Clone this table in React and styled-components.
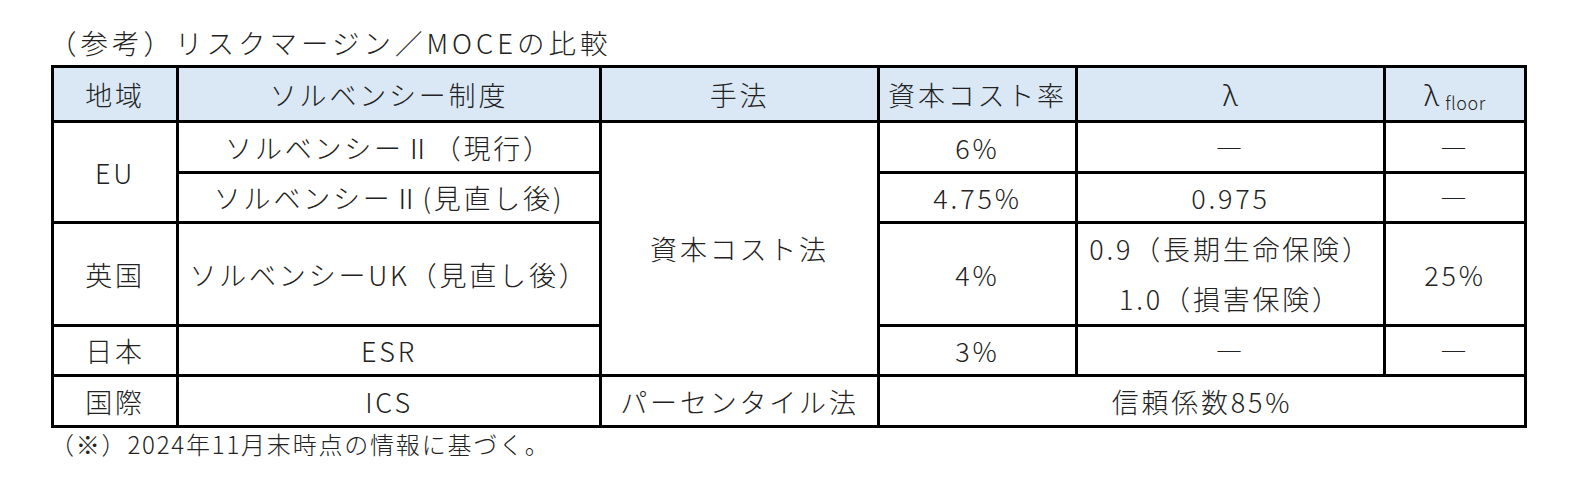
import React from 'react';
import styled, { createGlobalStyle } from 'styled-components';

const GlobalStyle = createGlobalStyle`
  html, body {
    margin: 0;
    padding: 0;
    background: #ffffff;
  }
  body {
    font-family: "Noto Sans CJK JP", "Noto Sans", sans-serif;
    font-weight: 300;
    color: #222222;
  }
`;

const Page = styled.div`
  width: 1582px;
  height: 482px;
  padding-left: 51px;
  box-sizing: border-box;
`;

const Title = styled.div`
  height: 65px;
  padding-top: 28px;
  box-sizing: border-box;
  line-height: 28px;
  font-size: 27.5px;
  letter-spacing: 4px;
  margin-left: -2px;
`;

const Table = styled.table`
  border-collapse: collapse;
  table-layout: fixed;
  width: 1473px;
  font-size: 27px;
  letter-spacing: 2.8px;

  th, td {
    border: 3px solid #000;
    padding: 0;
    text-align: center;
    vertical-align: middle;
    font-weight: 300;
    white-space: nowrap;
  }
`;

const HeadCell = styled.th`
  background: #dae8f6;
`;

const Row = styled.tr`
  height: ${p => p.$h}px;
`;

const Lines = styled.td`
  line-height: 50px;
`;

const Lambda = styled.span`
  font-family: "Noto Sans", "DejaVu Sans", sans-serif;
  font-size: 30px;
  font-weight: 300;
  letter-spacing: 0;
`;

const Sub = styled.span`
  font-size: 18px;
  letter-spacing: 0.5px;
  margin-left: 6px;
  vertical-align: -4px;
`;

const Note = styled.div`
  line-height: 32px;
  font-size: 24px;
  letter-spacing: 1.8px;
  margin-left: -1px;
`;

const widths = [125, 423, 278, 198, 308, 141];
const DASH = '―';

export default function App() {
  return (
    <>
      <GlobalStyle />
      <Page>
        <Title>（参考）リスクマージン／MOCEの比較</Title>
        <Table>
          <colgroup>
            {widths.map((w, i) => <col key={i} style={{ width: w }} />)}
          </colgroup>
          <thead>
            <Row $h={55}>
              <HeadCell>地域</HeadCell>
              <HeadCell>ソルベンシー制度</HeadCell>
              <HeadCell>手法</HeadCell>
              <HeadCell>資本コスト率</HeadCell>
              <HeadCell><Lambda>λ</Lambda></HeadCell>
              <HeadCell><Lambda>λ</Lambda><Sub>floor</Sub></HeadCell>
            </Row>
          </thead>
          <tbody>
            <Row $h={51}>
              <td rowSpan={2}>EU</td>
              <td>ソルベンシーⅡ（現行）</td>
              <td rowSpan={4}>資本コスト法</td>
              <td>6%</td>
              <td>{DASH}</td>
              <td>{DASH}</td>
            </Row>
            <Row $h={50}>
              <td>ソルベンシーⅡ(見直し後)</td>
              <td>4.75%</td>
              <td>0.975</td>
              <td>{DASH}</td>
            </Row>
            <Row $h={102}>
              <td>英国</td>
              <td>ソルベンシーUK（見直し後）</td>
              <td>4%</td>
              <Lines>0.9（長期生命保険）<br />1.0（損害保険）</Lines>
              <td>25%</td>
            </Row>
            <Row $h={50}>
              <td>日本</td>
              <td>ESR</td>
              <td>3%</td>
              <td>{DASH}</td>
              <td>{DASH}</td>
            </Row>
            <Row $h={51}>
              <td>国際</td>
              <td>ICS</td>
              <td>パーセンタイル法</td>
              <td colSpan={3}>信頼係数85%</td>
            </Row>
          </tbody>
        </Table>
        <Note>（※）2024年11月末時点の情報に基づく。</Note>
      </Page>
    </>
  );
}
